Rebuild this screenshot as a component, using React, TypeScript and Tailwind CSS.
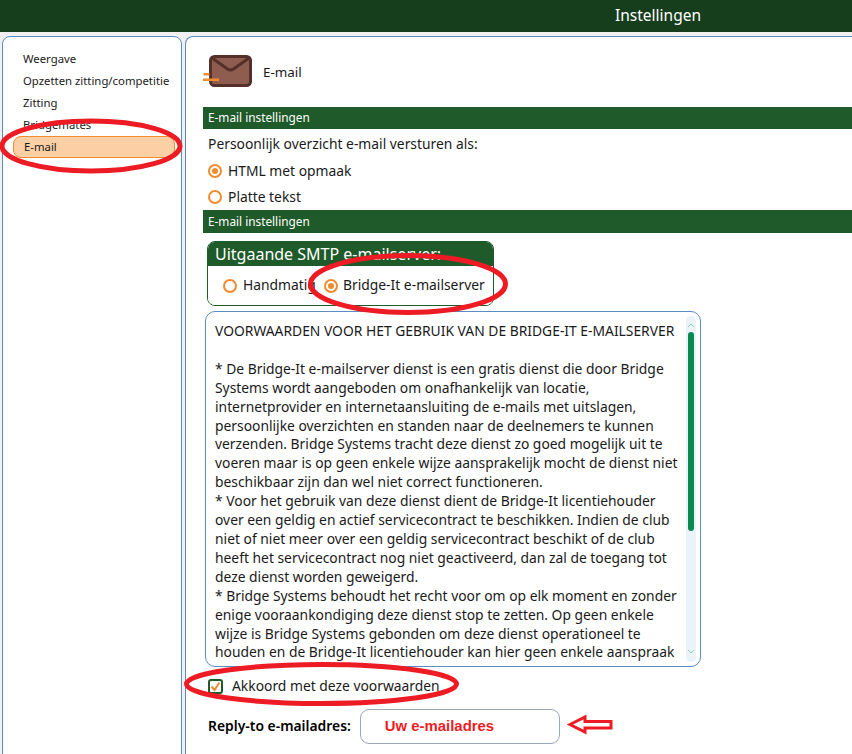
const font = { fontFamily: '"Noto Sans", "Open Sans", sans-serif' };

const terms = [
  "VOORWAARDEN VOOR HET GEBRUIK VAN DE BRIDGE-IT E-MAILSERVER",
  "\u00a0",
  "* De Bridge-It e-mailserver dienst is een gratis dienst die door Bridge",
  "Systems wordt aangeboden om onafhankelijk van locatie,",
  "internetprovider en internetaansluiting de e-mails met uitslagen,",
  "persoonlijke overzichten en standen naar de deelnemers te kunnen",
  "verzenden. Bridge Systems tracht deze dienst zo goed mogelijk uit te",
  "voeren maar is op geen enkele wijze aansprakelijk mocht de dienst niet",
  "beschikbaar zijn dan wel niet correct functioneren.",
  "* Voor het gebruik van deze dienst dient de Bridge-It licentiehouder",
  "over een geldig en actief servicecontract te beschikken. Indien de club",
  "niet of niet meer over een geldig servicecontract beschikt of de club",
  "heeft het servicecontract nog niet geactiveerd, dan zal de toegang tot",
  "deze dienst worden geweigerd.",
  "* Bridge Systems behoudt het recht voor om op elk moment en zonder",
  "enige vooraankondiging deze dienst stop te zetten. Op geen enkele",
  "wijze is Bridge Systems gebonden om deze dienst operationeel te",
  "houden en de Bridge-It licentiehouder kan hier geen enkele aanspraak",
];

function Radio({ on }: { on?: boolean }) {
  return (
    <span className="flex h-[14px] w-[14px] shrink-0 items-center justify-center rounded-full border-2 border-[#f28a2e] bg-white">
      {on && <span className="h-[6px] w-[6px] rounded-full bg-[#f28a2e]" />}
    </span>
  );
}

function SectionBar({ tall }: { tall?: boolean }) {
  return (
    <div className={`flex items-center bg-[#1f5a2a] pl-[5px] text-[11.8px] text-white ${tall ? "h-[23px]" : "h-[22px]"}`}>E-mail instellingen</div>
  );
}

export default function App() {
  return (
    <div style={font} className="relative h-[754px] w-[852px] overflow-hidden bg-[#f0f0f0] text-[13px] text-[#1a1a1a]">
      <header className="flex h-[32px] items-center justify-end bg-[#163d1c] pr-[151px] text-[15.5px] text-white">
        Instellingen
      </header>
      <div className="flex gap-[3px] pl-[2px] pt-[4px]">
        <nav className="h-[730px] w-[180px] shrink-0 rounded-[8px] border border-[#5b8cc4] bg-white pl-[10px] pr-[6px] pt-[11px] text-[11.35px]">
          {["Weergave", "Opzetten zitting/competitie", "Zitting", "Bridgemates"].map((t) => (
            <div key={t} className="flex h-[22px] items-center whitespace-nowrap pl-[10px]">{t}</div>
          ))}
          <div className="flex h-[22px] items-center rounded-[8px] border border-[#f28a2e] bg-[#fccfa5] pl-[10px]">E-mail</div>
        </nav>
        <main className="h-[730px] flex-1 rounded-tl-[8px] border border-r-0 border-[#5b8cc4] bg-white pl-[17px] pt-[16px]">
          <div className="flex h-[54px] items-start">
            <svg width="50" height="32" viewBox="0 0 50 32" className="mt-[2px] shrink-0">
              <rect x="7.5" y="1.5" width="40" height="29" rx="4" fill="#8e5d50" stroke="#55302b" strokeWidth="3" />
              <path d="M9 3 L24.5 14 Q27.5 16 30.5 14 L46 3" fill="none" stroke="#55302b" strokeWidth="3" />
              <rect x="0.5" y="18" width="6" height="2.5" fill="#f28a2e" />
              <rect x="0" y="23.5" width="16" height="2.5" fill="#f28a2e" />
            </svg>
            <span className="ml-[10px] mt-[9px] text-[13.4px]">E-mail</span>
          </div>
          <SectionBar />
          <div className="pl-[5px] pt-[5px] text-[13.85px]">
            <div className="flex h-[20px] items-center">Persoonlijk overzicht e-mail versturen als:</div>
            <div className="mt-[7px] flex h-[20px] items-center gap-[6px]"><Radio on />HTML met opmaak</div>
            <div className="mt-[6px] flex h-[20px] items-center gap-[6px]"><Radio />Platte tekst</div>
          </div>
          <div className="mt-[3px]"><SectionBar tall /></div>
          <div className="ml-[4px] mt-[8px] w-[287px] overflow-hidden rounded-[8px] border border-[#1f5a2a]">
            <div className="flex h-[24px] items-center bg-[#1f5a2a] pl-[7px] text-[16px] text-white">Uitgaande SMTP e-mailserver:</div>
            <div className="flex h-[39px] items-center bg-white pl-[15px] text-[13.85px]">
              <Radio /><span className="ml-[6px] w-[74px] shrink-0 whitespace-nowrap">Handmatig</span>
              <span className="ml-[7px]"><Radio on /></span><span className="ml-[5px] whitespace-nowrap">Bridge-It e-mailserver</span>
            </div>
          </div>
          <div className="relative ml-[2px] mt-[5px] h-[356px] w-[496px] overflow-hidden rounded-[10px] border border-[#5b8cc4] bg-white pl-[9px] pt-[10px] text-[13.85px] leading-[18.9px]">
            {terms.map((l, i) => <div key={i} className="whitespace-nowrap">{l}</div>)}
            <div className="absolute bottom-[4px] right-[4px] top-[4px] flex w-[10px] flex-col items-center justify-between rounded-[5px] bg-[#eaf2fa] py-[8px]">
              <svg width="8" height="5" viewBox="0 0 8 5" className="absolute top-[7px]"><path d="M1 4 L4 1 L7 4" fill="none" stroke="#8fcfae" strokeWidth="1" /></svg>
              <div className="mt-[8px] h-[199px] w-[6px] rounded-[3px] bg-[#0a8a50]" />
              <svg width="8" height="5" viewBox="0 0 8 5"><path d="M1 1 L4 4 L7 1" fill="none" stroke="#8fcfae" strokeWidth="1" /></svg>
            </div>
          </div>
          <label className="ml-[5px] mt-[9px] flex h-[20px] items-center gap-[9px] text-[13.85px]">
            <span className="flex h-[15px] w-[15px] items-center justify-center rounded-[3px] border-2 border-[#1f5a2a] bg-white">
              <svg width="11" height="11" viewBox="0 0 11 11"><path d="M1.5 5.5 L4.5 9 L9.5 1.5" fill="none" stroke="#f28a2e" strokeWidth="2" /></svg>
            </span>
            Akkoord met deze voorwaarden
          </label>
          <div className="ml-[5px] mt-[13px] flex items-center gap-[9px]">
            <span className="whitespace-nowrap text-[13.9px] font-semibold text-black">Reply-to e-mailadres:</span>
            <div className="flex h-[35px] w-[200px] items-center rounded-[9px] border border-[#9aa7b8] bg-white pl-[24px] text-[14.9px] font-bold text-[#ed1c24]" style={{ fontFamily: '"Liberation Sans", sans-serif' }}>
              Uw e-mailadres
            </div>
          </div>
        </main>
      </div>

      <svg className="pointer-events-none absolute left-0 top-0" width="852" height="754" viewBox="0 0 852 754" fill="none" stroke="#ed1c24">
        <ellipse cx="91" cy="146" rx="89" ry="25" strokeWidth="5" />
        <ellipse cx="408" cy="284" rx="97.5" ry="28.5" strokeWidth="5" />
        <ellipse cx="321.5" cy="684" rx="135" ry="19.5" strokeWidth="5" />
        <path d="M570 724.5 L585 717 L585 721.5 L611 721.5 L611 728 L585 728 L585 732 Z" strokeWidth="3" fill="#fff" />
      </svg>
    </div>
  );
}
